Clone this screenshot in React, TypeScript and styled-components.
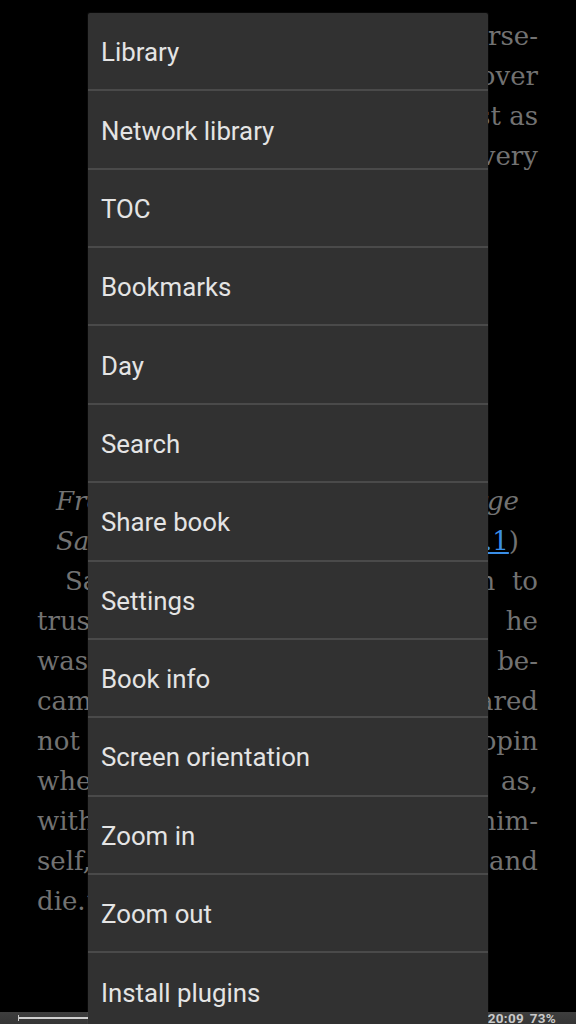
import React from "react";
import styled, { createGlobalStyle } from "styled-components";

const Global = createGlobalStyle`
  html, body { margin: 0; padding: 0; background: #000; }
  body { width: 576px; height: 1024px; overflow: hidden; }
  * { box-sizing: border-box; }
`;

const Screen = styled.div`
  position: relative;
  width: 576px;
  height: 1024px;
  overflow: hidden;
  background: #000;
  display: flex;
  flex-direction: column;
`;

const BookPage = styled.div`
  flex: 1;
  display: flex;
  flex-direction: column;
  padding: 16px 38px 0 37px;
  font-family: "DejaVu Serif", "Liberation Serif", serif;
  font-size: 26px;
  color: #727272;
`;

const Block = styled.div<{ $gap?: number; $inset?: number }>`
  display: flex;
  flex-direction: column;
  margin-top: ${(p) => p.$gap ?? 0}px;
  padding: 0 ${(p) => p.$inset ?? 0}px;
`;

const Line = styled.div<{ $align?: "right" | "justify" | "left"; $indent?: number; $italic?: boolean }>`
  height: 40px;
  line-height: 40px;
  white-space: nowrap;
  display: flex;
  justify-content: ${(p) =>
    p.$align === "right" ? "flex-end" : p.$align === "left" ? "flex-start" : "space-between"};
  padding-left: ${(p) => p.$indent ?? 0}px;
  font-style: ${(p) => (p.$italic ? "italic" : "normal")};
`;

const Upright = styled.span`
  font-style: normal;
`;

const NoteLink = styled.a`
  color: #3a8ee6;
  text-decoration: underline;
  font-style: normal;
`;

const StatusBar = styled.div`
  height: 12px;
  flex: 0 0 12px;
  background: linear-gradient(#3e3e3e, #353535);
  display: flex;
  align-items: center;
  justify-content: space-between;
  padding: 0 20px 0 18px;
`;

const Progress = styled.div`
  width: 200px;
  height: 6px;
  display: flex;
  align-items: center;
  border-left: 1.5px solid #c8c8c8;
`;

const ProgressFill = styled.div`
  height: 1.5px;
  background: linear-gradient(90deg, #d0d0d0 0%, #d0d0d0 65%, #8a8a8a 100%);
`;

const Clock = styled.div`
  font-family: Roboto, "Liberation Sans", sans-serif;
  font-weight: 700;
  font-size: 13.5px;
  line-height: 12px;
  height: 12px;
  color: #c9c9c9;
  letter-spacing: 0.3px;
  word-spacing: 2px;
`;

const Menu = styled.ul`
  position: absolute;
  top: 13px;
  left: 88px;
  width: 400px;
  margin: 0;
  padding: 0;
  list-style: none;
  background: #313131;
  border-radius: 2px;
  box-shadow: 0 0 0 1px rgba(255, 255, 255, 0.03);
`;

const MenuItem = styled.li`
  height: 78.36px;
  display: flex;
  align-items: center;
  padding: 2px 0 0 13px;
  border-bottom: 2px solid #4a4a4a;
  font-family: Roboto, "Liberation Sans", sans-serif;
  font-size: 25.8px;
  color: #e4e4e4;
  &:last-child { border-bottom: none; }
`;

const items = [
  "Library",
  "Network library",
  "TOC",
  "Bookmarks",
  "Day",
  "Search",
  "Share book",
  "Settings",
  "Book info",
  "Screen orientation",
  "Zoom in",
  "Zoom out",
  "Install plugins",
];

const bodyLines: [string, string][] = [
  ["Sand", "again  to"],
  ["trust", "he"],
  ["was", "be-"],
  ["came", "scared"],
  ["not", "Chopin"],
  ["when", "as,"],
  ["with", "him-"],
  ["self,", "and"],
];

export default function App() {
  return (
    <Screen>
      <Global />
      <BookPage>
        <Block>
          <Line $align="right">a verse-</Line>
          <Line $align="right">over</Line>
          <Line $align="right">just as</Line>
          <Line $align="right">every</Line>
        </Block>
        <Block $gap={305} $inset={19}>
          <Line $italic>
            <span>From</span>
            <span>George</span>
          </Line>
          <Line $italic>
            <span>Sand</span>
            <Upright>
              <NoteLink>1.1</NoteLink>)
            </Upright>
          </Line>
        </Block>
        <Block>
          <Line $indent={28}>
            <span>{bodyLines[0][0]}</span>
            <span style={{ whiteSpace: "pre" }}>{bodyLines[0][1]}</span>
          </Line>
          {bodyLines.slice(1).map(([a, b], i) => (
            <Line key={i}>
              <span>{a}</span>
              <span>{b}</span>
            </Line>
          ))}
          <Line $align="left">die.”</Line>
        </Block>
      </BookPage>
      <StatusBar>
        <Progress>
          <ProgressFill style={{ width: "70%" }} />
        </Progress>
        <Clock>20:09 73%</Clock>
      </StatusBar>
      <Menu>
        {items.map((t) => (
          <MenuItem key={t}>{t}</MenuItem>
        ))}
      </Menu>
    </Screen>
  );
}
